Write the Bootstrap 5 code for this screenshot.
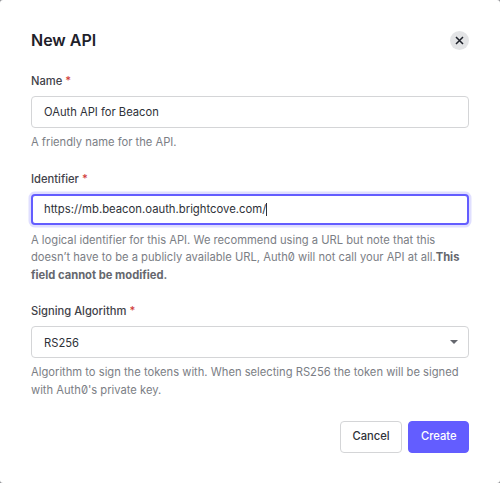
<!doctype html>
<html lang="en">
<head>
<meta charset="utf-8">
<title>New API</title>
<link rel="stylesheet" href="https://cdn.jsdelivr.net/npm/bootstrap@5.3.0/dist/css/bootstrap.min.css">
<style>
html, body { height: 100%; overflow: hidden; background: #8f9094; }
.dialog-panel { width: 500px; height: 483px; padding: 31px 31px 0; background: #fff; border-radius: 3px; font-family: Inter, "Liberation Sans", sans-serif; color: #1e212a; font-size: 11.2px; font-feature-settings: "zero"; letter-spacing: 0; }
.dialog-head { height: 19px; margin-bottom: 23px; }
.dialog-title { font-size: 16px; font-weight: 600; line-height: 19px; margin: 0; color: #1e212a; }
.close-round { width: 19px; height: 19px; border-radius: 50%; background: #e3e4e6; border: 0; padding: 0; display: flex; align-items: center; justify-content: center; }
.field-label { display: block; font-size: 11.2px; font-weight: 500; line-height: 16px; margin-bottom: 7px; color: #3f4249; }
.req { color: #d03c38; }
.field-input.form-control, .field-input.form-select { height: 31.5px; border: 1px solid #d4d5d7; border-radius: 4px; font-size: 11.2px; padding: 0 12px; color: #2e3138; box-shadow: none; background-color: #fff; }
.field-input.form-select { background-image: none; padding-top: 3px; }
.select-wrap { position: relative; }
.select-caret { position: absolute; right: 11px; top: 14px; width: 0; height: 0; border-left: 4px solid transparent; border-right: 4px solid transparent; border-top: 4px solid #65676e; }
.field-input.is-focus { border: 2px solid #635dff; padding: 0 11px; box-shadow: 0 0 0 2.5px #e0dfff; }
.caret-bar { display: inline-block; width: 1px; height: 13px; background: #2e3138; }
.field-input.fake { display: flex; align-items: center; white-space: pre; font-size: 11.3px; }
.field-help { font-size: 11.2px; line-height: 17.5px; color: #7b7e85; margin: 6.5px 0 0; }
.field-help b { font-weight: 700; color: #65676e; }
.btn-cancel.btn, .btn-create.btn { height: 31.5px; font-size: 11.2px; font-weight: 500; border-radius: 4px; padding: 0 12px; }
.btn-cancel.btn { background: #fff; border: 1px solid #d4d5d7; color: #2e3138; width: 62px; }
.btn-create.btn { background: #635dff; border: 1px solid #635dff; color: #fff; width: 61px; }
.gap-a { margin-bottom: 19px; }
.foot-row { margin-top: 22px; gap: 6.5px; }
</style>
</head>
<body class="m-0">
<div class="dialog-panel">
  <div class="dialog-head d-flex justify-content-between align-items-center">
    <h1 class="dialog-title">New API</h1>
    <button type="button" class="close-round" aria-label="Close">
      <svg width="9" height="9" viewBox="0 0 9 9" fill="none"><path d="M1 1l7 7M8 1L1 8" stroke="#1e212a" stroke-width="1.5"/></svg>
    </button>
  </div>
  <form>
    <div class="gap-a">
      <label class="field-label">Name <span class="req">*</span></label>
      <input class="form-control field-input" value="OAuth API for Beacon">
      <p class="field-help">A friendly name for the API.</p>
    </div>
    <div class="gap-a">
      <label class="field-label">Identifier <span class="req">*</span></label>
      <div class="form-control field-input fake is-focus">https://mb.beacon.oauth.brightcove.com/<span class="caret-bar"></span></div>
      <p class="field-help">A logical identifier for this API. We recommend using a URL but note that this doesn’t have to be a publicly available URL, Auth0 will not call your API at all.<b>This field cannot be modified.</b></p>
    </div>
    <div>
      <label class="field-label">Signing Algorithm <span class="req">*</span></label>
      <div class="select-wrap">
        <select class="form-select field-input"><option>RS256</option></select>
        <span class="select-caret"></span>
      </div>
      <p class="field-help">Algorithm to sign the tokens with. When selecting RS256 the token will be signed with Auth0's private key.</p>
    </div>
    <div class="foot-row d-flex justify-content-end">
      <button type="button" class="btn btn-cancel">Cancel</button>
      <button type="button" class="btn btn-create">Create</button>
    </div>
  </form>
</div>
<script src="https://cdn.jsdelivr.net/npm/bootstrap@5.3.0/dist/js/bootstrap.bundle.min.js"></script>
</body>
</html>
